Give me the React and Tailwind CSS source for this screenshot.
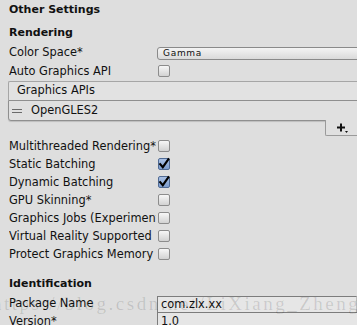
import React from "react";

const Check = ({ checked }) => (
  <div
    className={
      "w-[12px] h-[12px] rounded-[2px] border flex items-center justify-center shrink-0 " +
      (checked
        ? "border-[#4f6a94] bg-gradient-to-b from-[#a9c0e4] to-[#7b9ccc]"
        : "border-[#8c8c8c] bg-gradient-to-b from-[#f7f7f7] to-[#d2d2d2]")
    }
  >
    {checked && (
      <svg width="12" height="12" viewBox="0 0 12 12" className="overflow-visible">
        <path d="M2.2 6.2 L4.8 9.2 L10.4 1.2" fill="none" stroke="#000" strokeWidth="2.1" strokeLinecap="square" />
      </svg>
    )}
  </div>
);

const Row = ({ label, children }) => (
  <div className="h-[18px] flex items-center">
    <div className="w-[147px] ml-[9px] overflow-hidden whitespace-nowrap leading-[18px] text-[11.4px]">{label}</div>
    <div className="ml-[2px] flex items-center">{children}</div>
  </div>
);

export default function App() {
  const toggles = [
    ["Multithreaded Rendering*", false],
    ["Static Batching", true],
    ["Dynamic Batching", true],
    ["GPU Skinning*", false],
    ["Graphics Jobs (Experimental)*", false],
    ["Virtual Reality Supported", false],
    ["Protect Graphics Memory", false],
  ];
  return (
    <div className="relative w-[357px] h-[325px] overflow-hidden bg-[#dedede] text-[#111] text-[11.4px] font-['DejaVu_Sans',sans-serif]">
      <div className="h-[20px] pl-[9px] flex items-center font-bold text-[11px]">Other Settings</div>
      <div className="mt-[4px] h-[18px] pl-[9px] flex items-center font-bold text-[11px]">Rendering</div>

      <div className="mt-[2px] h-[18px] flex items-center">
        <div className="w-[148px] ml-[9px] whitespace-nowrap">Color Space*</div>
        <div className="flex-1 h-[13px] -mr-[6px] rounded-l-[3px] border border-[#8a8a8a] bg-gradient-to-b from-[#f4f4f4] to-[#dadada] flex items-center pl-[5px] text-[9px] tracking-[0.7px] leading-none">
          Gamma
        </div>
      </div>
      <Row label="Auto Graphics API">
        <Check checked={false} />
      </Row>

      <div className="mt-[1px] ml-[8px] w-[360px]">
        <div className="h-[19px] border-t border-l border-[#a6a6a6] rounded-tl-[2px] bg-[#e2e2e2] flex items-center pl-[8px] leading-none">
          Graphics APIs
        </div>
        <div className="h-[21px] border border-[#8f8f8f] rounded-bl-[3px] bg-[#e0e0e0] flex items-center shadow-[0_1px_1px_rgba(0,0,0,0.15)]">
          <div className="ml-[3px] w-[10px] flex flex-col gap-[2px]">
            <div className="h-[1px] bg-[#6a6a6a]" />
            <div className="h-[1px] bg-[#6a6a6a]" />
          </div>
          <div className="ml-[9px] leading-none">OpenGLES2</div>
        </div>
      </div>
      <div className="flex justify-end">
        <div className="-mt-px w-[32px] h-[16px] border-l border-b border-[#9a9a9a] bg-[#e0e0e0] rounded-bl-[2px] flex items-center justify-start pl-[11px]">
          <svg width="12" height="10" viewBox="0 0 12 10">
            <path d="M0 4.5 H8 M4 0.5 V8.5" stroke="#111" strokeWidth="2" />
            <path d="M8 8 L11 8 L9.5 10 Z" fill="#111" />
          </svg>
        </div>
      </div>

      <div className="mt-[1px]">
        {toggles.map(([l, c]) => (
          <Row key={l} label={l}>
            <Check checked={c} />
          </Row>
        ))}
      </div>

      <div className="mt-[12px] h-[18px] pl-[9px] flex items-center font-bold text-[11px]">Identification</div>

      <div className="mt-[2px] h-[17px] flex items-start">
        <div className="w-[148px] ml-[9px] whitespace-nowrap leading-[17px]">Package Name</div>
        <div className="mt-[1px] flex-1 h-[16px] border-t border-l border-[#7c7c7c] border-r border-r-[#bcbcbc] bg-[#e6e6e6] pl-[3px] leading-[15px]">
          com.zlx.xx
        </div>
      </div>
      <div className="h-[18px] flex items-start">
        <div className="w-[148px] ml-[9px] whitespace-nowrap leading-[18px]">Version*</div>
        <div className="flex-1 h-[18px] border-t border-l border-[#7c7c7c] bg-[#e6e6e6] pl-[3px] leading-[17px]">
          1.0
        </div>
      </div>

      <div className="pointer-events-none absolute left-[-8px] top-[294px] whitespace-nowrap font-['Liberation_Serif',serif] text-[19px] leading-none tracking-[2.5px] text-[rgba(0,0,0,0.13)]">
        https://blog.csdn.net/LiXiang_Zheng
      </div>
    </div>
  );
}
